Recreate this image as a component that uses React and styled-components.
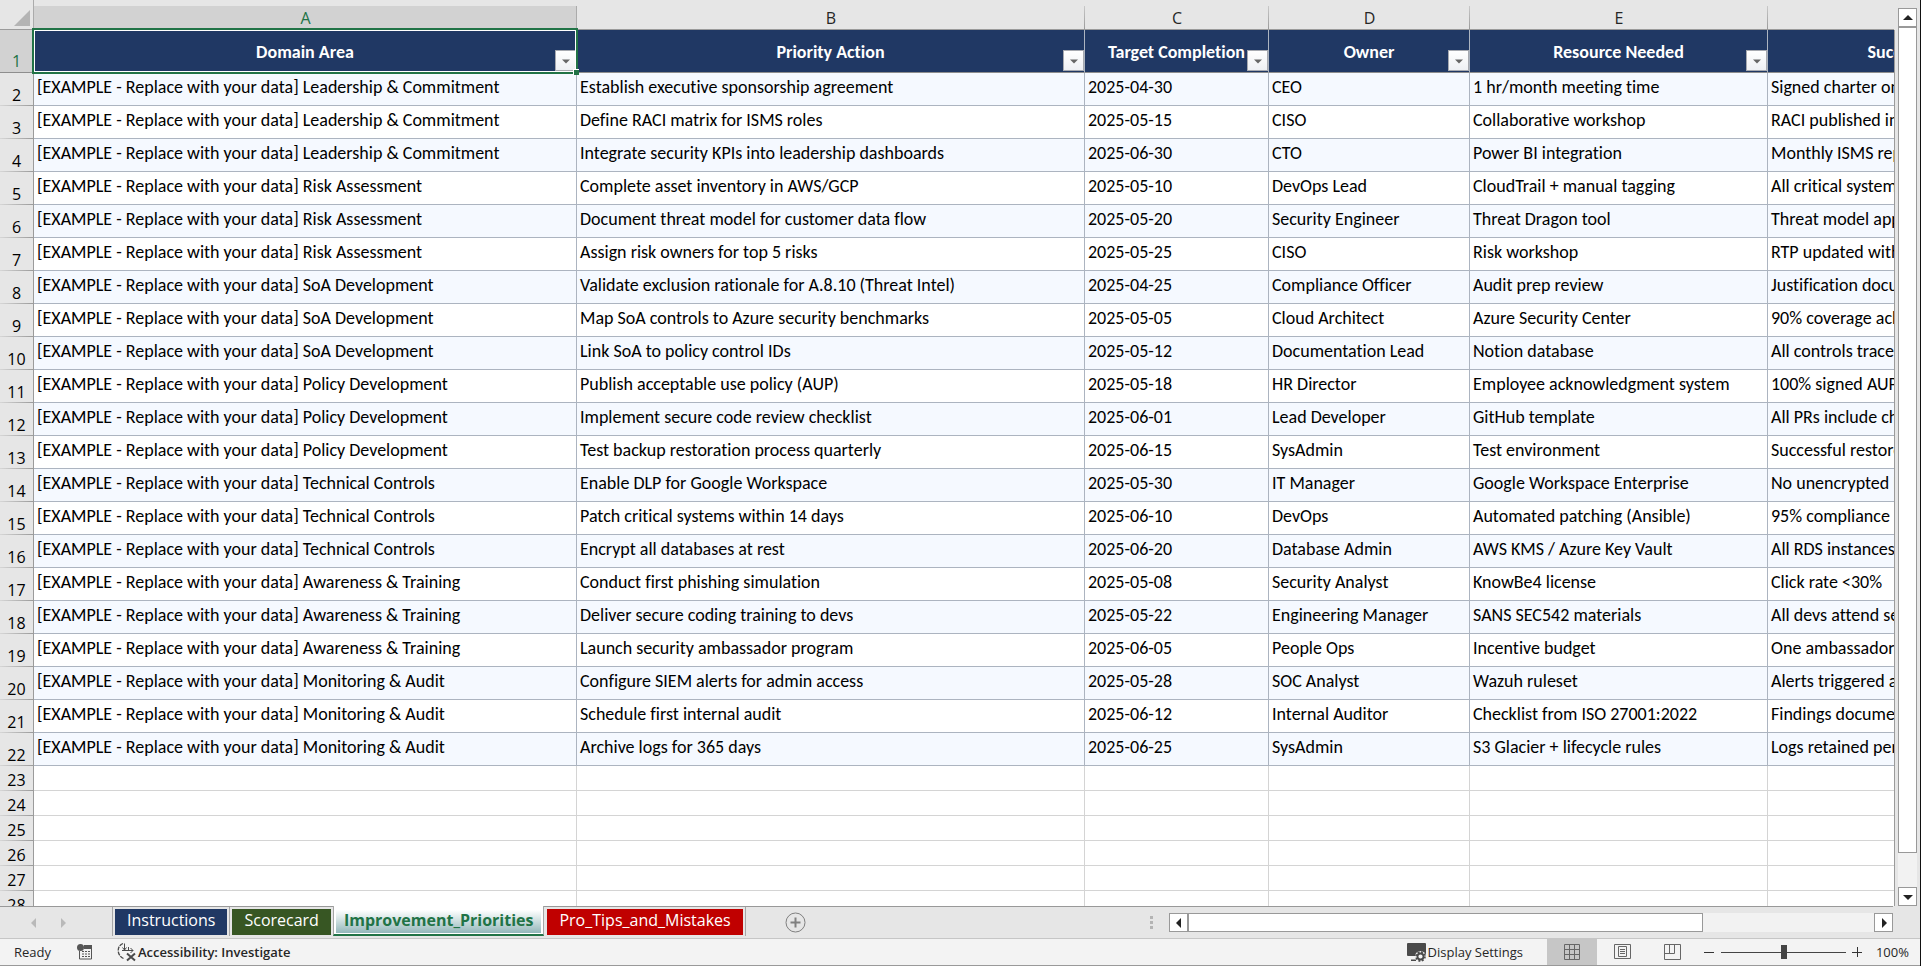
import React, { useState } from 'react'
import styled, { createGlobalStyle, css } from 'styled-components'

const GlobalStyle = createGlobalStyle`
  * {
    box-sizing: border-box;
  }

  body {
    margin: 0;
    background: #e6e6e6;
  }

  button, input {
    margin: 0;
    padding: 0;
    font: inherit;
    color: inherit;
  }
`

const uiFont = "'Open Sans', 'Noto Sans', sans-serif"
const cellFont = "Carlito, Lato, 'Open Sans', sans-serif"

const Window = styled.div`
  display: flex;
  flex-direction: column;
  height: 100vh;
  overflow: hidden;
  background: #e6e6e6;
  border-right: 1px solid #111;
  font-family: ${uiFont};
  color: #262626;
`

const Workspace = styled.div`
  display: flex;
  flex: 1;
  min-height: 0;
`

const Viewport = styled.div`
  flex: 1;
  min-width: 0;
  overflow: hidden;
`

const Sheet = styled.table`
  width: 2078px;
  table-layout: fixed;
  border-collapse: separate;
  border-spacing: 0;
  font-family: ${cellFont};
  font-size: 18px;
  font-variant-ligatures: none;
  color: #000;
`

const Corner = styled.td`
  height: 30px;
  padding: 0 3px 3px 0;
  vertical-align: bottom;
  text-align: right;
  border-right: 1px solid #ababab;
  border-bottom: 1px solid #9b9b9b;

  svg {
    display: block;
    margin-left: auto;
  }
`

const ColumnHead = styled.th`
  height: 30px;
  padding: 6px 0 0;
  border-bottom: 1px solid #9b9b9b;
  background: linear-gradient(#c8c8c8, #9b9b9b) right bottom / 1px 23px no-repeat;
  font: 400 16px/22px ${uiFont};
  color: ${props => (props.$active ? '#217346' : '#262626')};

  ${props => props.$active && css`
    background:
      linear-gradient(#ababab, #ababab) right bottom / 1px 23px no-repeat,
      linear-gradient(#d2d2d2, #d2d2d2) right bottom / 100% 23px no-repeat;
  `}
`

const RowHead = styled.th`
  height: ${props => props.$height}px;
  padding: 0;
  vertical-align: bottom;
  border-right: 1px solid #9b9b9b;
  background: linear-gradient(90deg, #d6d6d6, #9b9b9b) left bottom / 100% 1px no-repeat;
  font: 400 16px/22px ${uiFont};
  color: #000;

  ${props => props.$active && css`
    background: #d2d2d2;
    border-bottom: 1px solid #8e8e8e;
    color: #217346;
  `}
`

const FieldHead = styled.th`
  position: relative;
  height: 43px;
  padding: 1px 0 0;
  background: #203864;
  border-right: 1px solid #acb4c0;
  border-bottom: 1px solid #8e8e8e;
  font-weight: 700;
  line-height: 24px;
  white-space: nowrap;
  color: #fff;
`

const Selection = styled.span`
  position: absolute;
  inset: -2px;
  z-index: 2;
  border: 2px solid #217346;
  box-shadow: inset 0 0 0 1px #fff;
  pointer-events: none;
`

const FillHandle = styled.span`
  position: absolute;
  right: -3px;
  bottom: -3px;
  z-index: 3;
  width: 6px;
  height: 6px;
  border: solid #fff;
  border-width: 1px 0 0 1px;
  background: #217346;
`

const FilterButton = styled.button`
  position: absolute;
  right: 0;
  bottom: 1px;
  z-index: 1;
  display: flex;
  align-items: center;
  justify-content: center;
  width: 21px;
  height: 21px;
  border: 1px solid #a6a9b0;
  background: linear-gradient(#fff, #eef0f4);
`

const Cell = styled.td`
  height: ${props => (props.$empty ? 25 : 33)}px;
  padding: 0 3px;
  vertical-align: top;
  overflow: hidden;
  white-space: nowrap;
  line-height: 28px;
  background: ${props => (props.$striped ? '#f5f9ff' : '#fff')};
  border: solid ${props => (props.$empty ? '#d4d4d4' : '#acb4c0')};
  border-width: 0 1px 1px 0;
`

const VerticalBar = styled.div`
  display: flex;
  flex-direction: column;
  width: 26px;
  padding: 8px 3px 0 4px;
  background: linear-gradient(#9b9b9b, #9b9b9b) left 30px / 1px 100% no-repeat;
`

const HorizontalBar = styled.div`
  display: flex;
  flex: 13;
  height: 19px;
`

const ScrollButton = styled.button`
  display: flex;
  align-items: center;
  justify-content: center;
  flex: none;
  width: 19px;
  height: 19px;
  border: 1px solid #999;
  background: #fff;
`

const Track = styled.div`
  flex: 1;
  background: #f2f2f2;
`

const Thumb = styled.div`
  width: ${props => (props.$vertical ? '100%' : '75%')};
  height: ${props => (props.$vertical ? '96%' : '100%')};
  border: 1px solid #999;
  background: #fff;
`

const TabBar = styled.div`
  display: flex;
  align-items: flex-start;
  height: 32px;
  padding-right: 27px;
`

const TabArea = styled.div`
  display: flex;
  flex: 21;
  height: 100%;
  min-width: 0;
  border-top: 1px solid #999;
`

const TabNav = styled.div`
  display: flex;
  align-items: center;
  width: 112px;
  height: 31px;
  padding-left: 28px;
  gap: 20px;
`

const NavButton = styled.button`
  display: flex;
  justify-content: center;
  width: 10px;
  border: 0;
  background: none;
`

const TabList = styled.div`
  display: flex;
  height: 29px;
`

const TabSlot = styled.div`
  padding: 2px 2px 0;
  border-left: 1px solid ${props => (props.$plain ? 'transparent' : '#a6a6a6')};

  &:last-child {
    border-right: 1px solid #a6a6a6;
  }
`

const Tab = styled.button`
  height: 26px;
  padding: 0 12px 4px;
  border: 0;
  background: ${props => props.$color};
  font-size: 16px;
  line-height: 22px;
  color: #fff;
`

const ActiveTab = styled.button`
  height: 30px;
  margin-top: -1px;
  padding: 3px 2px 1px;
  border: solid #a6a6a6;
  border-width: 0 1px;
  border-bottom: 2px solid #217346;
  background: #fff;
  font-size: 16px;
  font-weight: 700;
  line-height: 20px;
  color: #217346;

  span {
    display: block;
    height: 23px;
    padding: 0 8px;
    background: linear-gradient(#fff, #e0ebeb 30%, #93b7ba);
  }
`

const AddSheet = styled.button`
  display: flex;
  align-self: center;
  margin-left: 39px;
  border: 0;
  background: none;
`

const Grip = styled.div`
  display: grid;
  align-self: center;
  gap: 2px;
  margin: 0 16px 0 auto;

  i {
    width: 3px;
    height: 3px;
    background: #b4b4b4;
  }
`

const BarSlot = styled.div`
  display: flex;
  flex: 13;
  height: 100%;
  padding-top: 6px;
  border-top: 1px solid #999;
`

const StatusBar = styled.footer`
  display: flex;
  align-items: center;
  height: 28px;
  padding: 0 11px 0 14px;
  background: #f3f3f3;
  border-top: 1px solid #c6c6c6;
  border-bottom: 1px solid #999;
  font-size: 13px;
  line-height: 18px;
`

const StatusButton = styled.button`
  display: flex;
  align-items: center;
  gap: 2px;
  margin-left: ${props => props.$gap}px;
  border: 0;
  background: none;
  font-weight: ${props => (props.$strong ? 600 : 400)};
  white-space: nowrap;
`

const Spacer = styled.div`
  flex: 1;
`

const ViewGroup = styled.div`
  display: flex;
  align-self: stretch;
  margin: 0 7px 0 24px;
`

const ViewButton = styled.button`
  display: flex;
  align-items: center;
  justify-content: center;
  width: 50px;
  border: 0;
  background: ${props => (props.$on ? '#c6c6c6' : 'transparent')};
`

const ZoomButton = styled.button`
  display: flex;
  border: 0;
  background: none;
`

const ZoomSlider = styled.input`
  width: 125px;
  height: 14px;
  margin: 0 6px;
  appearance: none;
  background: linear-gradient(#444, #444) center / 100% 1px no-repeat;

  &::-webkit-slider-thumb {
    appearance: none;
    width: 6px;
    height: 14px;
    background: #444;
  }
`

const ZoomValue = styled.output`
  width: 46px;
  text-align: right;
`

const columns = [
  { letter: 'A', title: 'Domain Area', width: 543 },
  { letter: 'B', title: 'Priority Action', width: 508 },
  { letter: 'C', title: 'Target Completion', width: 184 },
  { letter: 'D', title: 'Owner', width: 201 },
  { letter: 'E', title: 'Resource Needed', width: 298 },
  { letter: 'F', title: 'Success Metric', width: 310 },
]

const priorities = [
  ['Leadership & Commitment', 'Establish executive sponsorship agreement', '2025-04-30', 'CEO', '1 hr/month meeting time', 'Signed charter on file'],
  ['Leadership & Commitment', 'Define RACI matrix for ISMS roles', '2025-05-15', 'CISO', 'Collaborative workshop', 'RACI published in wiki'],
  ['Leadership & Commitment', 'Integrate security KPIs into leadership dashboards', '2025-06-30', 'CTO', 'Power BI integration', 'Monthly ISMS report'],
  ['Risk Assessment', 'Complete asset inventory in AWS/GCP', '2025-05-10', 'DevOps Lead', 'CloudTrail + manual tagging', 'All critical systems tagged'],
  ['Risk Assessment', 'Document threat model for customer data flow', '2025-05-20', 'Security Engineer', 'Threat Dragon tool', 'Threat model approved'],
  ['Risk Assessment', 'Assign risk owners for top 5 risks', '2025-05-25', 'CISO', 'Risk workshop', 'RTP updated with owners'],
  ['SoA Development', 'Validate exclusion rationale for A.8.10 (Threat Intel)', '2025-04-25', 'Compliance Officer', 'Audit prep review', 'Justification documented'],
  ['SoA Development', 'Map SoA controls to Azure security benchmarks', '2025-05-05', 'Cloud Architect', 'Azure Security Center', '90% coverage achieved'],
  ['SoA Development', 'Link SoA to policy control IDs', '2025-05-12', 'Documentation Lead', 'Notion database', 'All controls traceable'],
  ['Policy Development', 'Publish acceptable use policy (AUP)', '2025-05-18', 'HR Director', 'Employee acknowledgment system', '100% signed AUP'],
  ['Policy Development', 'Implement secure code review checklist', '2025-06-01', 'Lead Developer', 'GitHub template', 'All PRs include checklist'],
  ['Policy Development', 'Test backup restoration process quarterly', '2025-06-15', 'SysAdmin', 'Test environment', 'Successful restore'],
  ['Technical Controls', 'Enable DLP for Google Workspace', '2025-05-30', 'IT Manager', 'Google Workspace Enterprise', 'No unencrypted PII shared'],
  ['Technical Controls', 'Patch critical systems within 14 days', '2025-06-10', 'DevOps', 'Automated patching (Ansible)', '95% compliance'],
  ['Technical Controls', 'Encrypt all databases at rest', '2025-06-20', 'Database Admin', 'AWS KMS / Azure Key Vault', 'All RDS instances encrypted'],
  ['Awareness & Training', 'Conduct first phishing simulation', '2025-05-08', 'Security Analyst', 'KnowBe4 license', 'Click rate <30%'],
  ['Awareness & Training', 'Deliver secure coding training to devs', '2025-05-22', 'Engineering Manager', 'SANS SEC542 materials', 'All devs attend session'],
  ['Awareness & Training', 'Launch security ambassador program', '2025-06-05', 'People Ops', 'Incentive budget', 'One ambassador per team'],
  ['Monitoring & Audit', 'Configure SIEM alerts for admin access', '2025-05-28', 'SOC Analyst', 'Wazuh ruleset', 'Alerts triggered and logged'],
  ['Monitoring & Audit', 'Schedule first internal audit', '2025-06-12', 'Internal Auditor', 'Checklist from ISO 27001:2022', 'Findings documented'],
  ['Monitoring & Audit', 'Archive logs for 365 days', '2025-06-25', 'SysAdmin', 'S3 Glacier + lifecycle rules', 'Logs retained per policy'],
]

const emptyRows = [23, 24, 25, 26, 27, 28]

const Arrow = ({ points, color = '#222', size = 10 }) => (
  <svg width={size} height={size} viewBox="0 0 10 10" aria-hidden="true">
    <polygon points={points} fill={color} />
  </svg>
)

const MacroIcon = () => (
  <svg width="16" height="16" viewBox="0 0 16 16" aria-hidden="true">
    <path d="M2.5 7v8h12V2" fill="none" stroke="#555" />
    <path d="M7 1h8v4H7z" fill="#555" />
    <circle cx="3.5" cy="3.5" r="3.5" fill="#555" />
    <path d="M5 7.5h2m1 0h2m1 0h2M5 10h2m1 0h2m1 0h2M5 12.5h2m1 0h2m1 0h2" stroke="#555" />
  </svg>
)

const AccessibilityIcon = () => (
  <svg width="20" height="20" viewBox="0 0 20 20" aria-hidden="true" fill="none" stroke="#4a4a4a">
    <path d="M7 1.5C.5 4 .5 13 7.5 16.500" strokeWidth="1.300" strokeDasharray="4 1" />
    <path d="M8.500 1.500V8M6.500 5.500l2 2.500 2-2.500" />
    <path d="M6 8.500h11M14.500 6l2.500 2.500-2.500 2.500M12.500 5v4" />
    <path d="M11 11.500l8 7M19 11.500l-8 7" strokeWidth="2" />
  </svg>
)

const DisplayIcon = () => (
  <svg width="19" height="19" viewBox="0 0 19 19" aria-hidden="true">
    <path d="M1 0h17a1 1 0 0 1 1 1v12H1a1 1 0 0 1-1-1V1a1 1 0 0 1 1-1zM4 16.500h5V18H4z" fill="#4a4a4a" />
    <circle cx="13.500" cy="13.500" r="5.500" fill="#f3f3f3" />
    <circle cx="13.500" cy="13.500" r="3" fill="none" stroke="#4a4a4a" strokeWidth="1.800" />
    <circle cx="13.500" cy="13.500" r="4.500" fill="none" stroke="#4a4a4a" strokeWidth="1.600" strokeDasharray="2 1.530" />
  </svg>
)

const views = [
  { name: 'Normal', path: 'M.5.5h15v15H.5zM5.5.5v15M10.500.5v15M.5 5.500h15M.5 10.500h15' },
  { name: 'Page Layout', path: 'M.5.5h16v14H.5zM4.500 2.500h8v10h-8zM6 5.500h5M6 7.500h5M6 9.500h5' },
  { name: 'Page Break Preview', path: 'M.5.5h16v15H.5zM.5 9.500h10v-9M5.500.5v9' },
]

const HeaderRow = () => (
  <tr>
    <RowHead scope="row" $height={43} $active>1</RowHead>
    {columns.map(col => (
      <FieldHead key={col.letter} scope="col">
        {col.title}
        <FilterButton aria-label={`Filter ${col.title}`}>
          <Arrow points="0,3 10,3 5,8" color="#666" size={8} />
        </FilterButton>
        {col.letter === 'A' && <Selection />}
        {col.letter === 'A' && <FillHandle />}
      </FieldHead>
    ))}
  </tr>
)

const Grid = () => (
  <Sheet>
    <colgroup>
      <col style={{ width: 34 }} />
      {columns.map(col => <col key={col.letter} style={{ width: col.width }} />)}
    </colgroup>
    <thead>
      <tr>
        <Corner>
          <svg width="16" height="16" viewBox="0 0 16 16" aria-hidden="true">
            <path d="M16 0v16H0z" fill="#b4b4b4" />
          </svg>
        </Corner>
        {columns.map(col => (
          <ColumnHead key={col.letter} scope="col" $active={col.letter === 'A'}>{col.letter}</ColumnHead>
        ))}
      </tr>
      <HeaderRow />
    </thead>
    <tbody>
      {priorities.map(([domain, ...rest], i) => (
        <tr key={i}>
          <RowHead scope="row" $height={33}>{i + 2}</RowHead>
          <Cell $striped={i % 2 === 0}>[EXAMPLE - Replace with your data] {domain}</Cell>
          {rest.map((text, n) => <Cell key={n} $striped={i % 2 === 0}>{text}</Cell>)}
        </tr>
      ))}
      {emptyRows.map(row => (
        <tr key={row}>
          <RowHead scope="row" $height={25}>{row}</RowHead>
          {columns.map(col => <Cell key={col.letter} $empty />)}
        </tr>
      ))}
    </tbody>
  </Sheet>
)

const SheetTabs = () => (
  <TabList role="tablist">
    <TabSlot><Tab role="tab" $color="#203864">Instructions</Tab></TabSlot>
    <TabSlot><Tab role="tab" $color="#375623">Scorecard</Tab></TabSlot>
    <ActiveTab role="tab" aria-selected="true"><span>Improvement_Priorities</span></ActiveTab>
    <TabSlot $plain><Tab role="tab" $color="#c00000">Pro_Tips_and_Mistakes</Tab></TabSlot>
  </TabList>
)

const Status = () => {
  const [zoom, setZoom] = useState(100)

  return (
    <StatusBar>
      <span>Ready</span>
      <StatusButton $gap={26} aria-label="Record macro"><MacroIcon /></StatusButton>
      <StatusButton $gap={23} $strong><AccessibilityIcon />Accessibility: Investigate</StatusButton>
      <Spacer />
      <StatusButton $gap={0}><DisplayIcon />Display Settings</StatusButton>
      <ViewGroup>
        {views.map((view, i) => (
          <ViewButton key={view.name} aria-label={view.name} $on={i === 0}>
            <svg width="17" height="16" viewBox="0 0 17 16" fill="none" stroke="#666" aria-hidden="true">
              <path d={view.path} />
            </svg>
          </ViewButton>
        ))}
      </ViewGroup>
      <ZoomButton aria-label="Zoom out" onClick={() => setZoom(zoom - 10)}>
        <svg width="11" height="11" viewBox="0 0 11 11" aria-hidden="true"><path d="M0 5.500h10" stroke="#333" /></svg>
      </ZoomButton>
      <ZoomSlider
        type="range"
        min="10"
        max="190"
        value={zoom}
        aria-label="Zoom"
        onChange={e => setZoom(Number(e.target.value))}
      />
      <ZoomButton aria-label="Zoom in" onClick={() => setZoom(zoom + 10)}>
        <svg width="11" height="11" viewBox="0 0 11 11" aria-hidden="true"><path d="M0 5.500h10M5.500 0v10" stroke="#333" /></svg>
      </ZoomButton>
      <ZoomValue>{zoom}%</ZoomValue>
    </StatusBar>
  )
}

const App = () => (
  <Window>
    <GlobalStyle />
    <Workspace>
      <Viewport><Grid /></Viewport>
      <VerticalBar>
        <ScrollButton aria-label="Scroll up"><Arrow points="0,7 10,7 5,2" /></ScrollButton>
        <Track><Thumb $vertical /></Track>
        <ScrollButton aria-label="Scroll down"><Arrow points="0,3 10,3 5,8" /></ScrollButton>
      </VerticalBar>
    </Workspace>
    <TabBar>
      <TabArea>
        <TabNav>
          <NavButton aria-label="Previous sheets"><Arrow points="8,0 8,10 3,5" color="#b9b9b9" /></NavButton>
          <NavButton aria-label="Next sheets"><Arrow points="3,0 3,10 8,5" color="#b9b9b9" /></NavButton>
        </TabNav>
        <SheetTabs />
        <AddSheet aria-label="New sheet">
          <svg width="21" height="21" viewBox="0 0 21 21" fill="none" stroke="#808080" aria-hidden="true">
            <circle cx="10.500" cy="10.500" r="9.500" />
            <path d="M10.500 5.500v10M5.500 10.500h10" strokeWidth="2" />
          </svg>
        </AddSheet>
        <Grip><i /><i /><i /></Grip>
      </TabArea>
      <BarSlot>
        <HorizontalBar>
          <ScrollButton aria-label="Scroll left"><Arrow points="7,0 7,10 2,5" /></ScrollButton>
          <Track><Thumb /></Track>
          <ScrollButton aria-label="Scroll right"><Arrow points="3,0 3,10 8,5" /></ScrollButton>
        </HorizontalBar>
      </BarSlot>
    </TabBar>
    <Status />
  </Window>
)

export default App
